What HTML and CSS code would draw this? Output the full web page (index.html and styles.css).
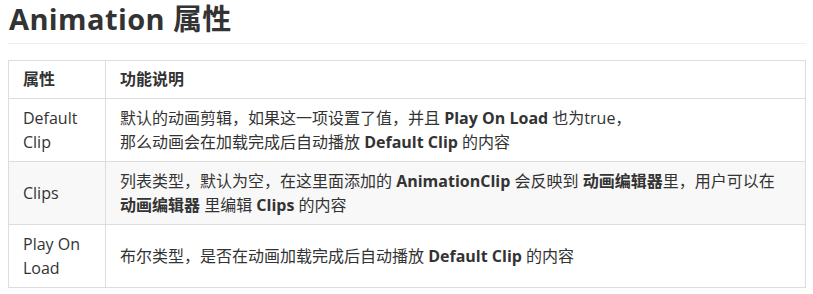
FILE: index.html
```html
<!DOCTYPE html>
<html lang="zh">
<head>
<meta charset="utf-8">
<link rel="stylesheet" href="styles.css">
</head>
<body>
<h2 class="title">Animation 属性</h2>
<table class="props">
  <thead>
    <tr><th class="c1">属性</th><th>功能说明</th></tr>
  </thead>
  <tbody>
    <tr>
      <td class="c1">Default Clip</td>
      <td>默认的动画剪辑，如果这一项设置了值，并且 <b>Play On Load</b> 也为true，<br>那么动画会在加载完成后自动播放 <b>Default Clip</b> 的内容</td>
    </tr>
    <tr class="alt">
      <td class="c1">Clips</td>
      <td>列表类型，默认为空，在这里面添加的 <b>AnimationClip</b> 会反映到 <b>动画编辑器</b>里，用户可以在<br><b>动画编辑器</b> 里编辑 <b>Clips</b> 的内容</td>
    </tr>
    <tr>
      <td class="c1">Play On Load</td>
      <td>布尔类型，是否在动画加载完成后自动播放 <b>Default Clip</b> 的内容</td>
    </tr>
  </tbody>
</table>
</body>
</html>
```
FILE: styles.css
```css
body {
  margin: 0 7px 0 8px;
  font-family: "Open Sans", "Noto Sans CJK SC", sans-serif;
  color: #333;
  background: #fff;
}
.title {
  margin: 0;
  padding: 0 0 6px 1px;
  font-size: 29px;
  line-height: 37px;
  font-weight: 700;
  letter-spacing: 0.4px;
  color: #333;
  border-bottom: 1px solid #eee;
}
.props {
  margin-top: 16px;
  width: 798px;
  border-collapse: collapse;
  font-size: 16px;
  line-height: 24px;
}
.props th, .props td {
  border: 1px solid #ddd;
  padding: 7px 14px;
  text-align: left;
  vertical-align: middle;
}
.props th {
  font-weight: 600;
  padding: 6px 14px 7px;
}
.props .c1 {
  width: 68px;
}
.props b {
  font-weight: 700;
}
.props .alt td {
  background: #f8f8f8;
}
```
